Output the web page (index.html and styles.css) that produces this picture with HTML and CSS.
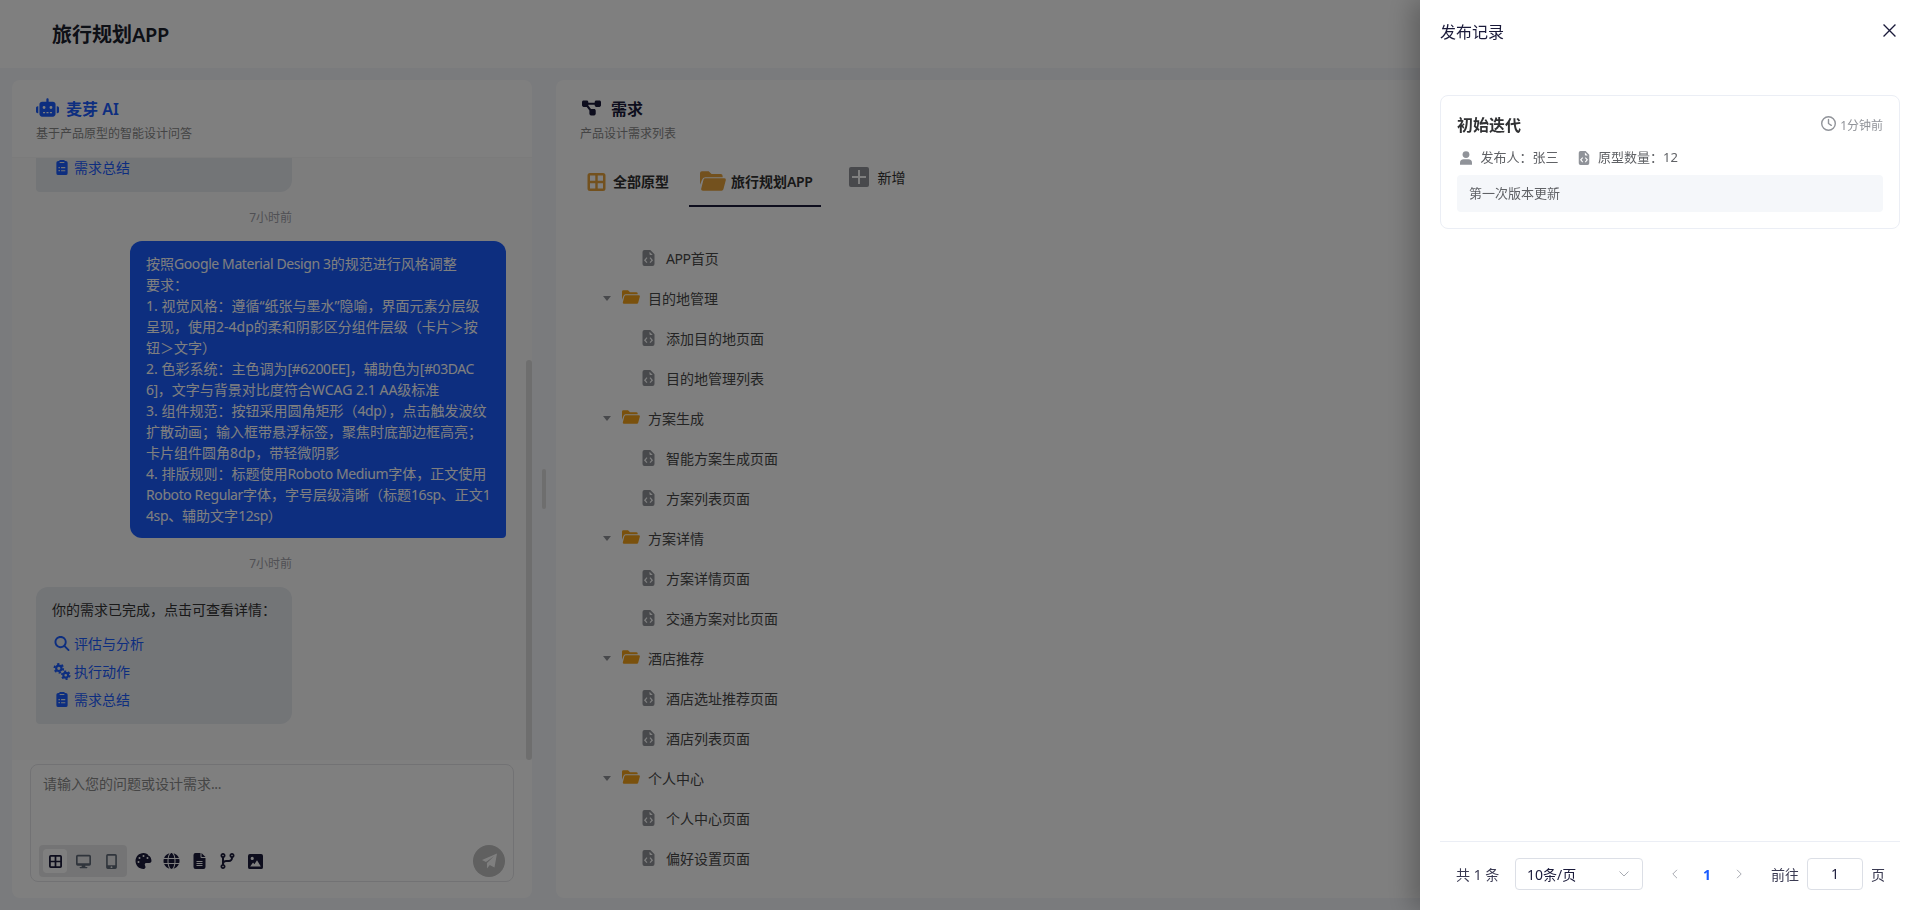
FILE: index.html
```html
<!DOCTYPE html>
<html lang="zh-CN">
<head>
    <meta charset="UTF-8">
    <title>旅行规划APP</title>
    <link rel="stylesheet" href="styles.css">
</head>
<body>
    <!-- icons -->
    <svg class="sprite" width="0" height="0">
        <symbol id="robot" viewBox="0 0 640 512"><path d="M320 0c17.700 0 32 14.300 32 32V96H472c39.800 0 72 32.200 72 72V440c0 39.800-32.200 72-72 72H168c-39.800 0-72-32.200-72-72V168c0-39.800 32.200-72 72-72H288V32c0-17.700 14.300-32 32-32zM208 384c-8.800 0-16 7.200-16 16s7.200 16 16 16h32c8.800 0 16-7.200 16-16s-7.200-16-16-16H208zm96 0c-8.800 0-16 7.200-16 16s7.200 16 16 16h32c8.800 0 16-7.200 16-16s-7.200-16-16-16H304zm96 0c-8.800 0-16 7.200-16 16s7.200 16 16 16h32c8.800 0 16-7.200 16-16s-7.200-16-16-16H400zM264 256a40 40 0 1 0-80 0 40 40 0 1 0 80 0zm152 40a40 40 0 1 0 0-80 40 40 0 1 0 0 80zM48 224H64V416H48c-26.500 0-48-21.500-48-48V272c0-26.500 21.500-48 48-48zm544 0c26.500 0 48 21.500 48 48v96c0 26.500-21.500 48-48 48H576V224h16z"/></symbol>
        <symbol id="diagram" viewBox="0 0 576 512"><path d="M0 80C0 53.500 21.500 32 48 32h96c26.500 0 48 21.500 48 48V96H384V80c0-26.500 21.500-48 48-48h96c26.500 0 48 21.500 48 48v96c0 26.500-21.500 48-48 48H432c-26.500 0-48-21.500-48-48V160H192v16c0 1.700-.1 3.400-.3 5L272 288h96c26.500 0 48 21.500 48 48v96c0 26.500-21.500 48-48 48H272c-26.500 0-48-21.500-48-48V336c0-1.700 .1-3.400 .3-5L144 224H48c-26.500 0-48-21.500-48-48V80z"/></symbol>
        <symbol id="search" viewBox="0 0 512 512"><path d="M416 208c0 45.900-14.900 88.300-40 122.700L502.600 457.400c12.500 12.500 12.500 32.800 0 45.300s-32.800 12.500-45.300 0L330.700 376c-34.400 25.200-76.800 40-122.700 40C93.100 416 0 322.900 0 208S93.100 0 208 0S416 93.100 416 208zM208 352a144 144 0 1 0 0-288 144 144 0 1 0 0 288z"/></symbol>
        <symbol id="gears" viewBox="0 0 32 32">
            <g fill="none" stroke="currentColor">
                <circle cx="10" cy="10" r="5" stroke-width="4"/>
                <circle cx="10" cy="10" r="8.200" stroke-width="3.600" stroke-dasharray="4.290 4.290"/>
                <circle cx="23" cy="23" r="4.500" stroke-width="4"/>
                <circle cx="23" cy="23" r="7.400" stroke-width="3.400" stroke-dasharray="3.870 3.870"/>
            </g>
        </symbol>
        <symbol id="clipboard" viewBox="0 0 384 512"><path fill-rule="evenodd" d="M128 0h128a32 32 0 0 1 32 32h32a64 64 0 0 1 64 64v352a64 64 0 0 1-64 64H64a64 64 0 0 1-64-64V96a64 64 0 0 1 64-64h32a32 32 0 0 1 32-32zM112 64v40h160V64zM72 236h48v48H72zM160 242h144v36H160zM72 340h48v48H72zM160 346h144v36H160z"/></symbol>
        <symbol id="grid" viewBox="0 0 18 18"><path fill-rule="evenodd" d="M2.500 0h13A2.500 2.500 0 0 1 18 2.500v13a2.500 2.500 0 0 1-2.500 2.500h-13A2.500 2.500 0 0 1 0 15.500v-13A2.500 2.500 0 0 1 2.500 0zM2.500 2.500v5.300h5.300V2.500zM10.200 2.500v5.300h5.300V2.500zM2.500 10.200v5.300h5.300v-5.300zM10.200 10.200v5.300h5.300v-5.300z"/></symbol>
        <symbol id="folder" viewBox="0 0 27 20"><path d="M0 14V2a2 2 0 0 1 2-2h7l3 2.700h9.500a2 2 0 0 1 2 2V6H5.500a3.500 3.500 0 0 0-3.400 2.600z"/><path d="M5.600 7.200H25a1.800 1.800 0 0 1 1.700 2.300l-2.400 9A2 2 0 0 1 22.400 20H3a1.800 1.800 0 0 1-1.700-2.300l2.300-9a2 2 0 0 1 2-1.500z"/></symbol>
        <symbol id="filecode" viewBox="0 0 384 512"><path fill-rule="evenodd" d="M64 0h186l134 134v314a64 64 0 0 1-64 64H64a64 64 0 0 1-64-64V64A64 64 0 0 1 64 0zM224 56v72a32 32 0 0 0 32 32h72zM158 256l-28-26-84 94 84 94 28-26-58-68zM226 256l28-26 84 94-84 94-28-26 58-68z"/></symbol>
        <symbol id="filetext" viewBox="0 0 384 512"><path fill-rule="evenodd" d="M64 0h160v128a32 32 0 0 0 32 32h128v288a64 64 0 0 1-64 64H64a64 64 0 0 1-64-64V64A64 64 0 0 1 64 0zM256 0l128 128H256zM96 256v34h192v-34zM96 320v34h192v-34zM96 384v34h192v-34z"/></symbol>
        <symbol id="desktop" viewBox="0 0 576 512"><path fill-rule="evenodd" d="M64 0h448a64 64 0 0 1 64 64v288a64 64 0 0 1-64 64H354l10 48h52a24 24 0 0 1 0 48H160a24 24 0 0 1 0-48h52l10-48H64a64 64 0 0 1-64-64V64A64 64 0 0 1 64 0zM64 64v256h448V64z"/></symbol>
        <symbol id="mobile" viewBox="0 0 384 512"><path fill-rule="evenodd" d="M64 0h256a56 56 0 0 1 56 56v400a56 56 0 0 1-56 56H64a56 56 0 0 1-56-56V56A56 56 0 0 1 64 0zM64 56v328h256V56zM192 416a32 32 0 1 0 0 64 32 32 0 1 0 0-64z"/></symbol>
        <symbol id="palette" viewBox="0 0 512 512"><path d="M512 256c0 .9 0 1.800 0 2.700c-.4 36.500-33.600 61.300-70.100 61.300H344c-26.500 0-48 21.500-48 48c0 3.400 .4 6.700 1 9.900c2.100 10.200 6.500 20 10.800 29.900c6.100 13.800 12.100 27.500 12.100 42c0 31.800-21.600 60.700-53.400 62c-3.500 .1-7 .2-10.600 .2C114.600 512 0 397.400 0 256S114.600 0 256 0S512 114.600 512 256zM128 288a32 32 0 1 0-64 0 32 32 0 1 0 64 0zm0-96a32 32 0 1 0 0-64 32 32 0 1 0 0 64zM288 96a32 32 0 1 0-64 0 32 32 0 1 0 64 0zm96 96a32 32 0 1 0 0-64 32 32 0 1 0 0 64z"/></symbol>
        <symbol id="globe" viewBox="0 0 512 512"><path d="M352 256c0 22.200-1.200 43.600-3.300 64H163.300c-2.200-20.400-3.300-41.800-3.300-64s1.200-43.600 3.300-64H348.700c2.200 20.400 3.300 41.800 3.300 64zm28.800-64H503.900c5.300 20.500 8.100 41.900 8.100 64s-2.800 43.500-8.100 64H380.800c2.100-20.600 3.200-42 3.200-64s-1.100-43.400-3.200-64zm112.600-32H376.700c-10-63.900-29.800-117.400-55.300-151.600c78.300 20.700 142 77.500 171.900 151.600zm-149.100 0H167.700c6.100-36.400 15.500-68.600 27-94.700c10.500-23.600 22.200-40.700 33.500-51.500C239.400 3.200 248.700 0 256 0s16.600 3.200 27.800 13.800c11.300 10.800 23 27.900 33.500 51.500c11.600 26 20.900 58.200 27 94.700zm-209 0H18.600C48.600 85.900 112.200 29.100 190.600 8.400C165.100 42.600 145.300 96.100 135.300 160zM8.100 192H131.200c-2.100 20.600-3.200 42-3.200 64s1.100 43.400 3.200 64H8.100C2.800 299.500 0 278.100 0 256s2.800-43.500 8.100-64zM194.700 446.600c-11.600-26-20.900-58.200-27-94.600H344.300c-6.100 36.400-15.500 68.600-27 94.600c-10.500 23.600-22.200 40.700-33.500 51.500C272.600 508.800 263.300 512 256 512s-16.600-3.200-27.800-13.800c-11.300-10.800-23-27.900-33.500-51.500zM135.300 352c10 63.900 29.800 117.400 55.300 151.600C112.200 482.900 48.600 426.100 18.600 352H135.300zm358.100 0c-30 74.100-93.600 130.900-171.900 151.600c25.500-34.200 45.200-87.700 55.300-151.600H493.400z"/></symbol>
        <symbol id="branch" viewBox="0 0 448 512"><path d="M80 104a24 24 0 1 0 0-48 24 24 0 1 0 0 48zm80-24c0 32.800-19.700 61-48 73.300v87.800c18.800-10.900 40.700-17.100 64-17.100h96c35.300 0 64-28.700 64-64v-6.700C307.700 141 288 112.800 288 80c0-44.200 35.800-80 80-80s80 35.800 80 80c0 32.800-19.700 61-48 73.300V160c0 70.700-57.300 128-128 128H176c-35.300 0-64 28.700-64 64v6.700c28.300 12.300 48 40.500 48 73.300c0 44.200-35.800 80-80 80s-80-35.800-80-80c0-32.800 19.700-61 48-73.300V352 153.300C19.700 141 0 112.800 0 80C0 35.800 35.800 0 80 0s80 35.800 80 80zm232 0a24 24 0 1 0-48 0 24 24 0 1 0 48 0zM80 456a24 24 0 1 0 0-48 24 24 0 1 0 0 48z"/></symbol>
        <symbol id="image" viewBox="0 0 16 16"><path fill-rule="evenodd" d="M2 0h12a2 2 0 0 1 2 2v12a2 2 0 0 1-2 2H2a2 2 0 0 1-2-2V2a2 2 0 0 1 2-2zM4.500 3a1.700 1.700 0 1 0 0 3.400 1.700 1.700 0 1 0 0-3.400zM2.300 13.200h11.400L9.600 6.600 6.800 10.800 5.400 9z"/></symbol>
        <symbol id="plane" viewBox="0 0 16 16"><path d="M16 0L0 7l4.200 2L13 2.700 5.300 10v6l3-3.700L13.300 15z"/></symbol>
        <symbol id="clock" viewBox="0 0 512 512"><path d="M464 256A208 208 0 1 1 48 256a208 208 0 1 1 416 0zM0 256a256 256 0 1 0 512 0A256 256 0 1 0 0 256zM232 120V256c0 8 4 15.500 10.700 20l96 64c11 7.400 25.900 4.400 33.300-6.700s4.400-25.900-6.700-33.300L280 243.200V120c0-13.300-10.700-24-24-24s-24 10.700-24 24z"/></symbol>
        <symbol id="user" viewBox="0 0 14 16"><circle cx="7" cy="4" r="4"/><path d="M0 16v-2.200A4.300 4.300 0 0 1 4.300 9.500h5.400a4.300 4.300 0 0 1 4.300 4.300V16z"/></symbol>
    </svg>

    <header class="topbar">
        <h1>旅行规划<span class="en">APP</span></h1>
    </header>

    <main class="workspace">
        <section class="panel chat">
            <div class="panel-head">
                <h2 class="brand"><svg class="i-robot"><use href="#robot"/></svg>麦芽 AI</h2>
                <p>基于产品原型的智能设计问答</p>
            </div>
            <div class="messages">
                <div class="bubble reply">
                    <a><svg><use href="#clipboard"/></svg>需求总结</a>
                </div>
                <span class="time">7小时前</span>
                <div class="bubble mine">按照<span class="en">Google Material Design 3</span>的规范进行风格调整<br>要求：<br>1. 视觉风格：遵循“纸张与墨水”隐喻，界面元素分层级呈现，使用2-4dp的柔和阴影区分组件层级（卡片＞按钮＞文字）<br>2. 色彩系统：主色调为<span class="en">[#6200EE]</span>，辅助色为<span class="en">[#03DAC6]</span>，文字与背景对比度符合WCAG 2.1 AA级标准<br>3. 组件规范：按钮采用圆角矩形（<span class="en">4dp</span>），点击触发波纹扩散动画；输入框带悬浮标签，聚焦时底部边框高亮；卡片组件圆角8dp，带轻微阴影<br>4. 排版规则：标题使用<span class="en">Roboto Medium</span>字体，正文使用<span class="en">Roboto Regular</span>字体，字号层级清晰（标题<span class="en">16sp</span>、正文<span class="en">14sp</span>、辅助文字<span class="en">12sp</span>）</div>
                <span class="time">7小时前</span>
                <div class="bubble reply">
                    <p>你的需求已完成，点击可查看详情：</p>
                    <a><svg><use href="#search"/></svg>评估与分析</a>
                    <a><svg class="i-gears"><use href="#gears"/></svg>执行动作</a>
                    <a><svg><use href="#clipboard"/></svg>需求总结</a>
                </div>
                <i class="scrollbar"></i>
            </div>
            <div class="composer">
                <span class="placeholder">请输入您的问题或设计需求<span class="en">...</span></span>
                <div class="tools">
                    <div class="devices">
                        <span class="on"><svg class="s13"><use href="#grid"/></svg></span>
                        <span><svg><use href="#desktop"/></svg></span>
                        <span><svg><use href="#mobile"/></svg></span>
                    </div>
                    <span class="tool"><svg><use href="#palette"/></svg><i class="dot"></i></span>
                    <span class="tool"><svg><use href="#globe"/></svg></span>
                    <span class="tool"><svg><use href="#filetext"/></svg></span>
                    <span class="tool"><svg><use href="#branch"/></svg></span>
                    <span class="tool"><svg class="s15"><use href="#image"/></svg></span>
                    <span class="send"><svg><use href="#plane"/></svg></span>
                </div>
            </div>
        </section>

        <div class="splitter"><i></i></div>

        <section class="panel needs">
            <div class="panel-head">
                <h2><svg class="i-diagram"><use href="#diagram"/></svg>需求</h2>
                <p>产品设计需求列表</p>
            </div>
            <nav class="tabs">
                <span class="tab"><svg class="i-grid"><use href="#grid"/></svg>全部原型</span>
                <span class="tab active"><svg class="i-folder"><use href="#folder"/></svg>旅行规划<span class="en">APP</span></span>
                <span class="add"><i></i>新增</span>
            </nav>
            <ul class="tree">
                <li class="file"><svg><use href="#filecode"/></svg><span class="en">APP</span>首页</li>
                <li class="dir"><svg><use href="#folder"/></svg>目的地管理</li>
                <li class="file"><svg><use href="#filecode"/></svg>添加目的地页面</li>
                <li class="file"><svg><use href="#filecode"/></svg>目的地管理列表</li>
                <li class="dir"><svg><use href="#folder"/></svg>方案生成</li>
                <li class="file"><svg><use href="#filecode"/></svg>智能方案生成页面</li>
                <li class="file"><svg><use href="#filecode"/></svg>方案列表页面</li>
                <li class="dir"><svg><use href="#folder"/></svg>方案详情</li>
                <li class="file"><svg><use href="#filecode"/></svg>方案详情页面</li>
                <li class="file"><svg><use href="#filecode"/></svg>交通方案对比页面</li>
                <li class="dir"><svg><use href="#folder"/></svg>酒店推荐</li>
                <li class="file"><svg><use href="#filecode"/></svg>酒店选址推荐页面</li>
                <li class="file"><svg><use href="#filecode"/></svg>酒店列表页面</li>
                <li class="dir"><svg><use href="#folder"/></svg>个人中心</li>
                <li class="file"><svg><use href="#filecode"/></svg>个人中心页面</li>
                <li class="file"><svg><use href="#filecode"/></svg>偏好设置页面</li>
            </ul>
        </section>
    </main>

    <div class="overlay">
        <aside class="drawer">
            <div class="drawer-head">
                <span>发布记录</span>
                <svg viewBox="0 0 12 12"><path d="M.5 .5l11 11M11.500 .5l-11 11"/></svg>
            </div>
            <div class="record">
                <div class="record-top">
                    <h3>初始迭代</h3>
                    <span><svg><use href="#clock"/></svg>1分钟前</span>
                </div>
                <div class="meta">
                    <span><svg><use href="#user"/></svg>发布人：张三</span>
                    <span><svg><use href="#filecode"/></svg>原型数量：12</span>
                </div>
                <p class="note">第一次版本更新</p>
            </div>
            <div class="pagination">
                <span class="total">共 1 条</span>
                <span class="select">10条/页<svg viewBox="0 0 10 6"><path d="M.5 .5L5 5 9.500 .5"/></svg></span>
                <span class="pager"><svg viewBox="0 0 6 10"><path d="M5 .8L.8 5 5 9.200"/></svg></span>
                <span class="pager current">1</span>
                <span class="pager"><svg viewBox="0 0 6 10"><path d="M1 .8L5.200 5 1 9.200"/></svg></span>
                <span class="goto">前往</span>
                <span class="page-input">1</span>
                <span class="unit">页</span>
            </div>
        </aside>
    </div>
</body>
</html>
```

FILE: styles.css
```css
* {
    box-sizing: border-box;
}
body {
    margin: 0;
    height: 910px;
    overflow: hidden;
    display: flex;
    flex-direction: column;
    font-family: "Noto Sans", "Noto Sans CJK SC", sans-serif;
    font-size: 14px;
    line-height: 1.5;
    color: #333;
    background: #f4f6fa;
}
h1, h2, h3, p, ul {
    margin: 0;
    padding: 0;
}
svg {
    fill: currentColor;
    flex: none;
}
.sprite {
    position: absolute;
}
.en {
    letter-spacing: -0.4px;
}
.topbar {
    flex: none;
    height: 68px;
    padding: 2px 52px 0;
    display: flex;
    align-items: center;
    background: #fff;
}
.topbar h1 {
    font-size: 20px;
    font-weight: 600;
    color: #1a202c;
}
.workspace {
    flex: 1;
    min-height: 0;
    display: flex;
    padding: 12px;
}
.panel {
    background: #fff;
    border-radius: 8px;
    overflow: hidden;
    display: flex;
    flex-direction: column;
}
.chat {
    width: 520px;
}
.needs {
    flex: 1;
}
.panel-head {
    flex: none;
    height: 77px;
    padding: 16px 24px 0;
}
.panel-head h2 {
    display: flex;
    align-items: center;
    height: 26px;
    font-size: 16px;
    font-weight: 600;
    color: #1a1a3a;
}
.panel-head h2.brand {
    color: #1a5cff;
}
.panel-head p {
    margin-top: 3px;
    font-size: 12px;
    color: #888;
}
.i-robot {
    width: 23px;
    height: 19px;
    margin: -4px 7px 0 0;
}
.i-diagram {
    width: 19px;
    height: 18px;
    margin: -3px 10px 0 2px;
}

/* chat */
.messages {
    position: relative;
    flex: none;
    height: 603px;
    padding: 0 26px 36px 24px;
    overflow: hidden;
    display: flex;
    flex-direction: column;
    justify-content: flex-end;
    background: #fbfbfb;
    border-top: 1px solid #f7f7f7;
}
.bubble {
    flex: none;
    border-radius: 12px;
    padding: 12px 16px;
}
.reply {
    width: 256px;
    padding-bottom: 11px;
    background: #e6eaef;
    border-bottom-left-radius: 4px;
    color: #333;
}
.reply p {
    margin-bottom: 9px;
}
.reply a {
    display: flex;
    align-items: center;
    height: 28px;
    color: #1a5cff;
}
.reply a svg {
    width: 18px;
    height: 15px;
    margin: 0 3px 0 1px;
}
.reply a .i-gears {
    height: 17px;
}
.mine {
    align-self: flex-end;
    width: 376px;
    padding-right: 15px;
    background: #1a5cff;
    border-bottom-right-radius: 4px;
    color: #fff;
    word-break: break-all;
}
.time {
    flex: none;
    width: 256px;
    height: 49px;
    line-height: 52px;
    text-align: right;
    font-size: 12px;
    color: #a0a0a8;
}
.scrollbar {
    position: absolute;
    right: 0;
    bottom: 0;
    width: 6px;
    height: 400px;
    border-radius: 3px;
    background: #dcdcdc;
}
.composer {
    margin: 4px 18px 0;
    height: 118px;
    padding: 8px 8px 4px;
    border: 1px solid #e4e4e8;
    border-radius: 8px;
    display: flex;
    flex-direction: column;
    justify-content: space-between;
}
.placeholder {
    padding-left: 4px;
    color: #8a8a8a;
}
.tools {
    display: flex;
    align-items: center;
    color: #1a1a3a;
}
.devices {
    display: flex;
    gap: 4px;
    padding: 4px;
    margin-right: 2px;
    border-radius: 4px;
    background: #e9e9eb;
    color: #606a78;
}
.devices span, .tool {
    position: relative;
    width: 24px;
    height: 24px;
    display: flex;
    align-items: center;
    justify-content: center;
    border-radius: 4px;
}
.devices .on {
    background: #fff;
    color: #1a1a3a;
}
.tool {
    width: 28px;
}
.devices svg {
    width: 15px;
    height: 15px;
}
.tool svg {
    width: 17px;
    height: 16px;
}
.devices .s13 {
    width: 13px;
    height: 13px;
}
.tool .s15 {
    height: 15px;
}
.dot {
    position: absolute;
    top: -2px;
    right: 0;
    width: 10px;
    height: 10px;
    border-radius: 50%;
    background: #fff;
}
.send {
    width: 32px;
    height: 32px;
    margin-left: auto;
    display: flex;
    align-items: center;
    justify-content: center;
    border-radius: 50%;
    background: #c0c0c0;
    color: #fff;
}
.send svg {
    width: 15px;
    height: 16px;
}
.splitter {
    width: 24px;
    display: flex;
    align-items: center;
    justify-content: center;
}
.splitter i {
    width: 4px;
    height: 40px;
    border-radius: 2px;
    background: #dcdcdc;
}

/* requirement tree */
.tabs {
    display: flex;
    height: 50px;
    padding-left: 17px;
}
.tab {
    display: flex;
    align-items: center;
    height: 50px;
    padding: 0 8px 2px 14px;
    font-weight: 600;
    color: #303030;
}
.tab.active {
    margin-left: 12px;
    padding: 0 9px 0 11px;
    border-bottom: 2px solid #1a1a3a;
}
.i-grid {
    width: 19px;
    height: 18px;
    margin: 2px 7px 0 0;
    color: #e6a23c;
}
.i-folder {
    width: 26px;
    height: 20px;
    margin-right: 5px;
    color: #e6a23c;
}
.add {
    display: flex;
    align-items: center;
    height: 40px;
    margin-left: 28px;
}
.add i {
    width: 20px;
    height: 20px;
    margin-right: 8px;
    border-radius: 2px;
    background: linear-gradient(#fff, #fff) center / 14px 2px no-repeat, linear-gradient(#fff, #fff) center / 2px 14px no-repeat, #909399;
}
.tree {
    list-style: none;
    padding-top: 31px;
}
.tree li {
    display: flex;
    align-items: center;
    height: 40px;
    color: #484848;
}
.tree .file {
    padding-left: 86px;
}
.tree .file svg {
    width: 13px;
    height: 16px;
    margin-right: 11px;
    color: #909399;
}
.tree .dir {
    padding-left: 47px;
}
.tree .dir::before {
    content: "";
    margin-right: 11px;
    border: 4.5px solid transparent;
    border-top: 5px solid #909399;
    border-bottom: 0;
}
.tree .dir svg {
    width: 18px;
    height: 14px;
    margin: -2px 8px 0 0;
    color: #f5a31a;
}

/* drawer */
.overlay {
    position: fixed;
    inset: 0;
    display: flex;
    justify-content: flex-end;
    background: rgba(0, 0, 0, 0.5);
}
.drawer {
    width: 500px;
    padding: 20px;
    display: flex;
    flex-direction: column;
    background: #fff;
    box-shadow: -8px 0 24px rgba(0, 0, 0, 0.25);
}
.drawer-head {
    display: flex;
    justify-content: space-between;
    height: 75px;
    font-size: 16px;
    color: #1a1a3a;
}
.drawer-head svg {
    width: 13px;
    height: 13px;
    margin: 4px 4px 0 0;
    fill: none;
    stroke: #1a1a3a;
    stroke-width: 1.2;
}
.record {
    height: 134px;
    padding: 16px;
    border: 1px solid #ebeef5;
    border-radius: 8px;
}
.record-top {
    display: flex;
    align-items: center;
    justify-content: space-between;
    height: 26px;
}
.record-top h3 {
    font-size: 16px;
    font-weight: 700;
    color: #303133;
}
.record-top span {
    display: flex;
    align-items: center;
    padding-top: 1px;
    font-size: 12px;
    color: #909399;
}
.record-top svg {
    width: 15px;
    height: 15px;
    margin: -4px 4px 0 0;
}
.meta {
    display: flex;
    gap: 19px;
    height: 37px;
    padding: 3px 0 0 3px;
    font-size: 13px;
    color: #606266;
}
.meta span {
    display: flex;
    align-items: center;
}
.meta svg {
    width: 12px;
    height: 14px;
    margin: -1px 8.500px 0 0;
    color: #909399;
}
.note {
    height: 37px;
    padding: 0 12px;
    border-radius: 4px;
    line-height: 36px;
    font-size: 13px;
    color: #606266;
    background: #f5f7fa;
}
.pagination {
    display: flex;
    align-items: center;
    height: 49px;
    margin-top: auto;
    padding: 16px 16px 0;
    border-top: 1px solid #ebeef5;
    white-space: nowrap;
    color: #3a3a52;
}
.total {
    width: 43px;
}
.select {
    flex: none;
    display: flex;
    align-items: center;
    justify-content: space-between;
    width: 128px;
    height: 32px;
    margin: 0 16px;
    padding: 0 13px 0 11px;
    border: 1px solid #dcdfe6;
    border-radius: 4px;
    color: #1a1a3a;
}
.pagination svg {
    width: 10px;
    height: 6px;
    fill: none;
    stroke: #a8abb2;
}
.pager {
    flex: none;
    width: 32px;
    display: flex;
    justify-content: center;
}
.pagination .pager svg {
    width: 6px;
    height: 10px;
}
.current {
    font-weight: 700;
    color: #1a5cff;
}
.goto {
    width: 28px;
    margin: 0 8px 0 16px;
}
.page-input {
    flex: none;
    width: 56px;
    height: 32px;
    margin-right: 8px;
    border: 1px solid #dcdfe6;
    border-radius: 4px;
    line-height: 30px;
    text-align: center;
    color: #1a1a3a;
}
```
